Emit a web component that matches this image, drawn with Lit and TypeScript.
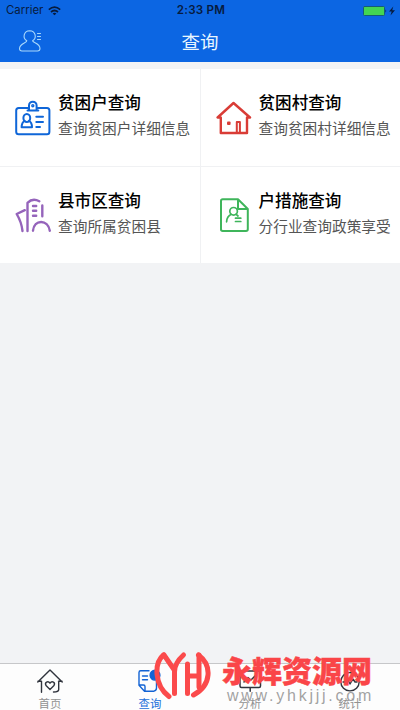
import { LitElement, html, css, svg } from "lit";
import { customElement } from "lit/decorators.js";

const cards = [
  {
    title: "贫困户查询",
    sub: "查询贫困户详细信息",
    color: "#0f66d8",
    icon: svg`<g stroke-width="2"><path d="M13 8H3.7Q1.2 8 1.2 10.5V31.7Q1.2 34.2 3.7 34.2H32Q34.4 34.2 34.4 31.7V10.5Q34.4 8 32 8H22.5"/><path d="M12.5 10.5H23.3M14 10V5.5A3.8 3.8 0 0 1 21.6 5.5V10"/><circle cx="17.8" cy="5.8" r=".7"/><ellipse cx="11.8" cy="18" rx="3.4" ry="4"/><path d="M9.6 20.8Q6.7 22.3 6.6 27.3H17Q17 22.3 14 20.8M21.3 16.7H28M21.3 22H28M21.3 27H25"/></g>`,
  },
  {
    title: "贫困村查询",
    sub: "查询贫困村详细信息",
    color: "#d93c36",
    icon: svg`<g stroke-width="2.4"><path d="M1.6 17.5L17.5 3L34 17.5M1.8 17.5H4.8V33H31V17.5H34"/><path d="M20.8 32.5V22H23.9V32.5" stroke-width="2"/><path d="M12 22.4h1.6v1.6h-1.6z" stroke-width="2"/></g>`,
  },
  {
    title: "县市区查询",
    sub: "查询所属贫困县",
    color: "#9564bb",
    icon: svg`<g stroke-width="2.4"><path d="M12.5 34V5.8Q17.5.8 24.3 4.2M9.8 13.2L1.7 17Q6.5 25 7.5 34M27.3 8.5V19.3M18 33.7C19 22 33 22 34.8 33.7M18 9H21.2M18 13.8H21.2M18 18.7H21.2"/></g>`,
  },
  {
    title: "户措施查询",
    sub: "分行业查询政策享受",
    color: "#3fb55b",
    icon: svg`<g stroke-width="2"><path d="M22 2.3H6.7Q5 2.3 5 4V32.3Q5 34 6.7 34H30Q31.8 34 31.8 32.3V12L22 2.3V12H31.5"/></g><g stroke-width="1.7"><circle cx="17.6" cy="14.3" r="3.8"/><path d="M15.2 17.3Q10.8 19.5 10.6 24.8M20 17.2L22 19M19.5 21.2H24.8M19.5 24.5H24.8"/></g>`,
  },
];

const tabs = [
  {
    label: "首页",
    active: false,
    icon: svg`<g stroke="#30343d" stroke-width="1.4"><path d="M1.8 14L14 2L26.2 14M26 13.2H22.5M2 13.2H5.5V24.3M22.7 13.2V21.5Q22.7 24 17.5 24"/><path d="M14 21.4L10 17.5C8.3 14.5 12 12.3 14 15.2C16 12.3 19.7 14.5 18 17.5Z"/></g>`,
  },
  {
    label: "查询",
    active: true,
    icon: svg`<g stroke="#1263d4" stroke-width="1.4"><path d="M13 2.8H4.7Q3 2.8 3 4.5V17.3L8.5 23.2H18Q20.5 22.5 20.5 20V13M3.2 17H7.5Q9 17 9 18.5V23M6.5 8H11.5M6.5 11.7H11.5"/><circle cx="19" cy="7.2" r="4.9" fill="#1263d4"/></g>`,
  },
  {
    label: "分析",
    active: false,
    icon: svg`<g stroke="#30343d" stroke-width="1.5"><path d="M4 3H24.5M4 3V18Q4 19.5 5.5 19.5H23Q24.5 19.5 24.5 18V3M14.2 20V23.3M8 14L12 9.5L15 12L20 7"/></g>`,
  },
  {
    label: "统计",
    active: false,
    icon: svg`<g stroke="#30343d" stroke-width="1.4"><circle cx="14" cy="13.7" r="9.2"/><path d="M7 14H9L11 10L14 16L17 11L19 14H21"/></g>`,
  },
];

@customElement("app-root")
export class AppRoot extends LitElement {
  static styles = css`
    :host {
      display: flex;
      flex-direction: column;
      position: relative;
      height: 710px;
      overflow: hidden;
      background: #f2f3f5;
      font-family: "Noto Sans CJK SC", sans-serif;
      color: #000;
    }
    svg {
      display: block;
      fill: none;
      stroke-linecap: round;
      stroke-linejoin: round;
    }
    header {
      height: 62px;
      background: #0c66e3;
      flex: none;
    }
    .status {
      display: grid;
      grid-template-columns: 1fr auto 1fr;
      align-items: center;
      height: 21px;
      padding: 0 4px 0 6px;
      font: 11.4px/21px Inter, sans-serif;
      color: #071b3e;
    }
    .carrier {
      display: flex;
      align-items: center;
      gap: 5px;
    }
    .wifi {
      stroke-linecap: butt;
    }
    .time {
      font-weight: 600;
      font-size: 11.6px;
      letter-spacing: 0.25px;
    }
    .power {
      justify-self: end;
    }
    .nav {
      display: grid;
      grid-template-columns: 60px 1fr 60px;
      height: 40px;
      align-items: center;
    }
    .user {
      margin-left: 18px;
    }
    .heading {
      text-align: center;
      font-size: 18.5px;
      line-height: 40px;
      color: #e8f6ff;
    }
    .grid {
      display: grid;
      grid-template-columns: 1fr 1fr;
      grid-template-rows: 97px 96px;
      gap: 1px;
      margin-top: 7px;
      background: #f0f1f3;
      flex: none;
    }
    .card {
      display: flex;
      background: #fff;
      padding: 20px 0 0 15px;
      white-space: nowrap;
    }
    .card svg {
      margin: 11px 7px 0 0;
      flex: none;
    }
    .title {
      font-size: 16.6px;
      font-weight: 500;
      line-height: 26px;
    }
    .sub {
      font-size: 14.7px;
      line-height: 26px;
      color: #555;
    }
    .lower svg {
      margin-top: 10px;
    }
    .space {
      flex: 1;
    }
    .tabs {
      display: grid;
      grid-template-columns: repeat(4, 1fr);
      height: 47px;
      box-sizing: border-box;
      border-top: 1px solid #c6c7c9;
      background: #fdfdfd;
    }
    .tab {
      display: flex;
      flex-direction: column;
      align-items: center;
      gap: 1px;
      padding-top: 4px;
      font-size: 11.4px;
      color: #929292;
    }
    .tab span {
      line-height: 16px;
    }
    .active {
      color: #1b6fda;
    }
    .mark {
      position: absolute;
      left: 152px;
      top: 650px;
      display: flex;
      gap: 11px;
    }
    .brand {
      font-size: 30px;
      font-weight: 900;
      line-height: 38px;
      color: #fa4548;
      white-space: nowrap;
      -webkit-text-stroke: 0.4px #fa4548;
    }
    .url {
      margin: -1px 0 0 5px;
      font: 16px/18px "Liberation Sans", sans-serif;
      letter-spacing: 2.75px;
      color: rgba(145, 145, 145, 0.85);
    }
  `;

  render() {
    return html`
      <header>
        <div class="status">
          <div class="carrier">
            Carrier
            <svg class="wifi" width="13" height="10" viewBox="0 0 13 10" stroke="#071b3e" stroke-width="1.7">
              <path d="M.8 3.6Q6.5-1.4 12.2 3.6M3 6Q6.5 3 10 6" />
              <path d="M6.5 9.3L4.6 7.5Q6.5 6 8.4 7.5Z" fill="#071b3e" stroke="none" />
            </svg>
          </div>
          <div class="time">2:33 PM</div>
          <svg class="power" width="33" height="12" viewBox="0 0 33 12">
            <rect x=".5" y="1.5" width="21" height="9" rx="1" fill="#43d552" stroke="#155c75" />
            <path d="M22.5 4.3Q24 6 22.5 7.7Z" fill="#071b3e" />
            <path d="M30.3 1.5L26 6.5H28.7L27.5 10.5L32 5.3H29.2Z" fill="#071b3e" />
          </svg>
        </div>
        <div class="nav">
          <svg class="user" width="24" height="24" viewBox="0 0 24 24" stroke="#a9d8fb" stroke-width="1.1">
            <path d="M8.8 11.8C4.5 9.5 5.3 1.8 11.7 1.7C18 1.8 18.8 9.5 14.6 11.8C14.5 14 22 14 22 19.5Q22 22 19.5 22H4Q1.5 22 1.5 19.5C1.7 14.5 9 14 8.8 11.8ZM19.5 4.5H22.5M19.5 7.5H22.5M19.5 10.5H22.5" />
          </svg>
          <div class="heading">查询</div>
        </div>
      </header>
      <main class="grid">
        ${cards.map(
          (c, i) => html`<section class="card ${i > 1 ? "lower" : ""}">
            <svg width="36" height="36" viewBox="0 0 36 36" stroke=${c.color}>${c.icon}</svg>
            <div>
              <div class="title">${c.title}</div>
              <div class="sub">${c.sub}</div>
            </div>
          </section>`
        )}
      </main>
      <div class="space"></div>
      <nav class="tabs">
        ${tabs.map(
          (t) => html`<div class="tab ${t.active ? "active" : ""}">
            <svg width="28" height="26" viewBox="0 0 28 26">${t.icon}</svg>
            <span>${t.label}</span>
          </div>`
        )}
      </nav>
      <div class="mark">
        <svg width="59" height="50" viewBox="0 0 59 50" stroke="#fb4a4b" stroke-width="5">
          <path d="M11.5 5C2 13 2 35 17 46.5" />
          <path d="M12 5L22 19.5M31.5 5Q22.5 13 22.5 22V43.5" />
          <path d="M35.5 14V43.5M47 5V37M35.5 26H47" />
          <path d="M46.5 5C60 15 60 35 41.5 45" />
        </svg>
        <div>
          <div class="brand">永辉资源网</div>
          <div class="url">www.yhkjjj.com</div>
        </div>
      </div>
    `;
  }
}
